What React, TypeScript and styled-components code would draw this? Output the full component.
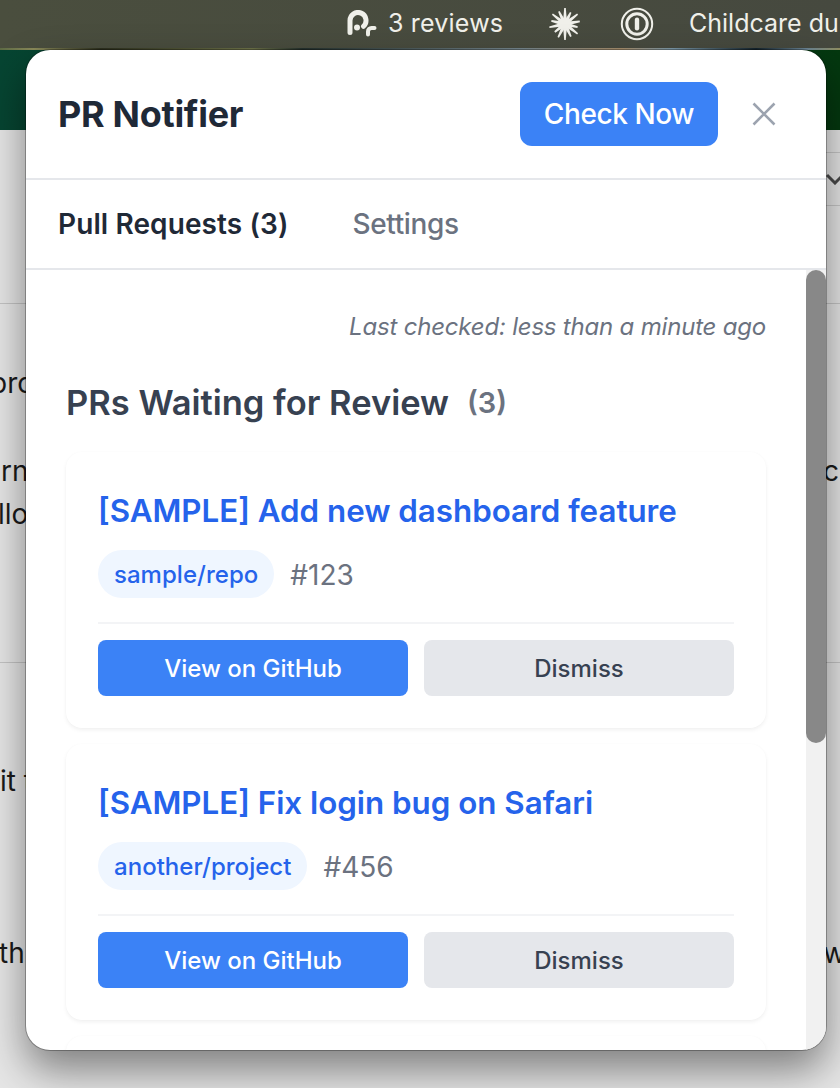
import React from "react";
import styled, { createGlobalStyle } from "styled-components";

const Global = createGlobalStyle`
  html, body { margin: 0; padding: 0; width: 840px; height: 1088px; overflow: hidden; }
  body { font-family: Inter, "Liberation Sans", sans-serif; background: #e6e6e6; }
  * { box-sizing: border-box; }
`;

const Screen = styled.div`
  position: relative;
  width: 840px;
  height: 1088px;
  overflow: hidden;
  display: flex;
  flex-direction: column;
  background: #e6e6e6;
`;

const MenuBar = styled.div`
  height: 48px;
  flex: none;
  display: flex;
  align-items: center;
  background: linear-gradient(90deg, #4a4e3e, #46493f);
  color: #f0f0ea;
  font-size: 25px;
  white-space: nowrap;
  padding-left: 346px;
`;

const PrIcon = styled.svg`
  width: 32px;
  height: 28px;
  flex: none;
  margin-right: 10px;
`;

const Reviews = styled.span`
  width: 160px;
  flex: none;
  padding-bottom: 2px;
  letter-spacing: 0.2px;
`;

const MenuTitle = styled.span`
  padding-bottom: 2px;
`;

const Burst = styled.svg`
  width: 34px;
  height: 34px;
  flex: none;
  margin-right: 38px;
`;

const Onepass = styled.svg`
  width: 34px;
  height: 34px;
  flex: none;
  margin-right: 35px;
`;

const Strip = styled.div`
  height: 2px;
  flex: none;
  background: linear-gradient(90deg, #5d6b45 0%, #8a8a5a 4%, #2c2f1e 12%, #6c7148 30%, #24302c 36%, #74858c 62%, #a58d6b 74%, #7b98a8 80%, #14232b 90%, #6a8494 96%, #8f8d60 100%);
`;

const Banner = styled.div`
  height: 80px;
  flex: none;
  background: linear-gradient(90deg, #064532, #04380f);
`;

const Doc = styled.main`
  flex: 1;
  display: flex;
  flex-direction: column;
  color: #1a1a1a;
  font-size: 28px;
  line-height: 43px;
`;

const ToolRow = styled.div`
  margin-top: 22px;
  height: 54px;
  flex: none;
  display: flex;
  justify-content: flex-end;
`;

const SelectBox = styled.div`
  width: 300px;
  display: flex;
  justify-content: flex-end;
  align-items: center;
  border-top: 1.5px solid #c6c6c6;
  border-bottom: 1.5px solid #c6c6c6;
`;

const Chevron = styled.svg`
  width: 20px;
  height: 12px;
  margin-right: -5px;
`;

const Rule = styled.hr<{ $top: number }>`
  margin: ${(p) => p.$top}px 0 0;
  border: 0;
  border-top: 1.5px solid #c4c4c4;
  flex: none;
`;

const Line = styled.div<{ $top: number }>`
  margin-top: ${(p) => p.$top}px;
  height: 43px;
  flex: none;
  display: flex;
  justify-content: space-between;
  white-space: nowrap;
`;

const LeftBit = styled.span<{ $shift: number }>`
  margin-left: ${(p) => p.$shift}px;
`;

const RightBit = styled.span`
  width: 17px;
  flex: none;
`;

const Popup = styled.section`
  position: absolute;
  left: 26px;
  top: 50px;
  width: 800px;
  height: 1000px;
  background: #fff;
  border-radius: 24px;
  overflow: hidden;
  display: flex;
  flex-direction: column;
  box-shadow: 0 0 0 1px rgba(0, 0, 0, 0.28), 0 20px 42px rgba(0, 0, 0, 0.45);
`;

const Header = styled.header`
  height: 130px;
  flex: none;
  display: flex;
  align-items: center;
  padding: 0 50px 0 32px;
  border-bottom: 2px solid #e5e7eb;
`;

const Title = styled.h1`
  margin: 0;
  flex: 1;
  font-size: 36px;
  font-weight: 700;
  color: #1f2937;
  letter-spacing: -0.3px;
`;

const CheckButton = styled.button`
  width: 198px;
  height: 64px;
  border: 0;
  border-radius: 12px;
  background: #3b82f6;
  color: #fff;
  font: 500 28px Inter, sans-serif;
  letter-spacing: -0.4px;
  margin-right: 34px;
`;

const CloseIcon = styled.svg`
  width: 24px;
  height: 24px;
  flex: none;
  color: #9ca3af;
`;

const Tabs = styled.nav`
  height: 90px;
  flex: none;
  display: flex;
  align-items: center;
  gap: 64px;
  padding: 0 32px;
  border-bottom: 2px solid #e5e7eb;
`;

const Tab = styled.span<{ $active?: boolean }>`
  font-size: 28px;
  font-weight: ${(p) => (p.$active ? 600 : 500)};
  letter-spacing: ${(p) => (p.$active ? "0.1px" : "-0.35px")};
  color: ${(p) => (p.$active ? "#1f2937" : "#6b7280")};
`;

const Body = styled.div`
  flex: 1;
  min-height: 0;
  display: flex;
`;

const Scroller = styled.div`
  flex: 1;
  min-width: 0;
  overflow: hidden;
  padding: 38px 40px 0;
`;

const Rail = styled.div`
  width: 20px;
  flex: none;
  background: #f1f1f1;
`;

const Thumb = styled.div`
  height: 473px;
  border-radius: 10px;
  background: #888;
`;

const LastChecked = styled.p`
  margin: 0;
  height: 38px;
  text-align: right;
  font-size: 24px;
  line-height: 38px;
  font-style: italic;
  letter-spacing: -0.2px;
  color: #6b7280;
`;

const SectionHead = styled.div`
  margin-top: 34px;
  height: 44px;
  display: flex;
  align-items: center;
  gap: 18px;
`;

const SectionTitle = styled.h2`
  margin: 0;
  font-size: 34.5px;
  font-weight: 600;
  color: #374151;
`;

const Count = styled.span`
  font-size: 29px;
  font-weight: 600;
  color: #6b7280;
`;

const Cards = styled.div`
  margin-top: 28px;
  display: flex;
  flex-direction: column;
  gap: 16px;
`;

const Card = styled.article`
  height: 276px;
  padding: 32px;
  background: #fff;
  border-radius: 16px;
  box-shadow: 0 2px 4px rgba(0, 0, 0, 0.06), 0 0 2px rgba(0, 0, 0, 0.015);
  display: flex;
  flex-direction: column;
`;

const PrTitle = styled.a`
  display: block;
  height: 50px;
  font-size: 31.3px;
  line-height: 54px;
  font-weight: 600;
  color: #2563eb;
`;

const Meta = styled.div`
  margin-top: 16px;
  display: flex;
  align-items: center;
  gap: 16px;
`;

const RepoPill = styled.span`
  height: 48px;
  padding: 0 16px;
  border-radius: 24px;
  background: #eff6ff;
  color: #2563eb;
  font-size: 24px;
  font-weight: 500;
  line-height: 50px;
  letter-spacing: 0.03px;
`;

const PrNumber = styled.span`
  font-size: 28px;
  line-height: 36px;
  padding-top: 2px;
  color: #6b7280;
`;

const Actions = styled.div`
  margin-top: 24px;
  padding-top: 16px;
  border-top: 2px solid #f3f4f6;
  display: grid;
  grid-template-columns: 1fr 1fr;
  gap: 16px;
`;

const ActionButton = styled.button<{ $primary?: boolean }>`
  height: 56px;
  border: 0;
  border-radius: 8px;
  background: ${(p) => (p.$primary ? "#3b82f6" : "#e5e7eb")};
  color: ${(p) => (p.$primary ? "#fff" : "#374151")};
  font: 500 24px Inter, sans-serif;
`;

const rays = [
  [0, 16], [26, 13], [52, 16], [80, 15], [104, 13], [128, 16], [155, 14],
  [180, 16], [207, 15], [232, 13], [258, 16], [283, 14], [308, 16], [334, 14],
];

const prs = [
  { title: "[SAMPLE] Add new dashboard feature", repo: "sample/repo", num: "#123" },
  { title: "[SAMPLE] Fix login bug on Safari", repo: "another/project", num: "#456" },
  { title: "[SAMPLE] Update documentation", repo: "sample/docs", num: "#789" },
];

export default function App() {
  return (
    <Screen>
      <Global />
      <MenuBar>
        <PrIcon viewBox="0 0 32 28" fill="none" stroke="currentColor" strokeLinecap="round">
          <path d="M4 22.5V10.5a8 8 0 1 1 13.5 5.8" strokeWidth="5" />
          <circle cx="11" cy="17.5" r="3" fill="currentColor" stroke="none" />
          <path d="M22 24.5v-3a3.5 3.5 0 0 1 3.5-3.5h3" strokeWidth="4" />
        </PrIcon>
        <Reviews>3 reviews</Reviews>
        <Burst viewBox="-17 -17 34 34" fill="currentColor">
          <circle r="5" />
          {rays.map(([a, len]) => (
            <polygon key={a} points={`-1.9,-3 1.9,-3 0.8,-${len} -0.8,-${len}`} transform={`rotate(${a})`} />
          ))}
        </Burst>
        <Onepass viewBox="-17 -17 34 34" fill="none" stroke="currentColor">
          <circle r="15.2" strokeWidth="2" />
          <circle r="10.2" strokeWidth="3" />
          <rect x="-2.2" y="-6.5" width="4.4" height="13" rx="2.2" fill="currentColor" stroke="none" />
        </Onepass>
        <MenuTitle>Childcare du</MenuTitle>
      </MenuBar>
      <Strip />
      <Banner />
      <Doc>
        <ToolRow>
          <SelectBox>
            <Chevron viewBox="0 0 20 12" fill="none" stroke="#4a4a4a" strokeWidth="3">
              <path d="M2 2l8 8 8-8" />
            </Chevron>
          </SelectBox>
        </ToolRow>
        <Rule $top={97} />
        <Line $top={58}><LeftBit $shift={-10}>pro</LeftBit></Line>
        <Line $top={45}><LeftBit $shift={1}>rn</LeftBit><RightBit>cl</RightBit></Line>
        <Line $top={0}><LeftBit $shift={-2}>llo</LeftBit></Line>
        <Rule $top={126} />
        <Line $top={97}><LeftBit $shift={0}>it t</LeftBit></Line>
        <Line $top={129}><LeftBit $shift={-1}>th</LeftBit><RightBit>w</RightBit></Line>
      </Doc>
      <Popup>
        <Header>
          <Title>PR Notifier</Title>
          <CheckButton>Check Now</CheckButton>
          <CloseIcon viewBox="0 0 24 24" fill="none" stroke="currentColor" strokeWidth="2.6">
            <path d="M1.5 1.5l21 21M22.5 1.5l-21 21" />
          </CloseIcon>
        </Header>
        <Tabs>
          <Tab $active>Pull Requests (3)</Tab>
          <Tab>Settings</Tab>
        </Tabs>
        <Body>
          <Scroller>
            <LastChecked>Last checked: less than a minute ago</LastChecked>
            <SectionHead>
              <SectionTitle>PRs Waiting for Review</SectionTitle>
              <Count>(3)</Count>
            </SectionHead>
            <Cards>
              {prs.map((pr) => (
                <Card key={pr.num}>
                  <PrTitle>{pr.title}</PrTitle>
                  <Meta>
                    <RepoPill>{pr.repo}</RepoPill>
                    <PrNumber>{pr.num}</PrNumber>
                  </Meta>
                  <Actions>
                    <ActionButton $primary>View on GitHub</ActionButton>
                    <ActionButton>Dismiss</ActionButton>
                  </Actions>
                </Card>
              ))}
            </Cards>
          </Scroller>
          <Rail>
            <Thumb />
          </Rail>
        </Body>
      </Popup>
    </Screen>
  );
}
